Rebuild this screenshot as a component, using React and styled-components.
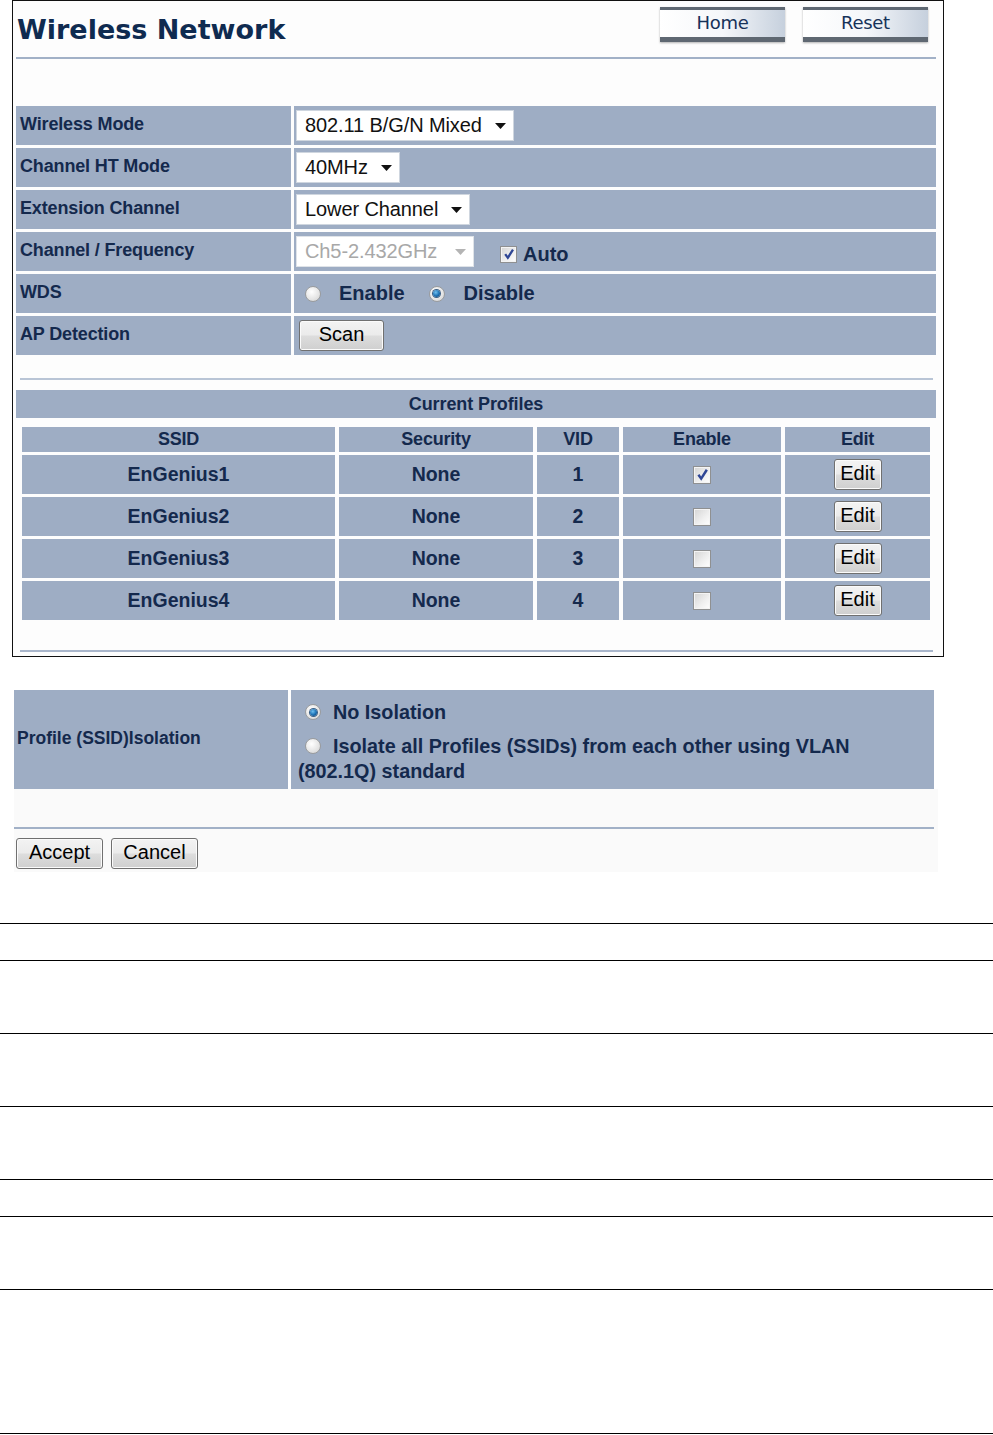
import React from "react";
import styled, { createGlobalStyle } from "styled-components";

const GlobalStyle = createGlobalStyle`
  html, body { margin: 0; padding: 0; background: #ffffff; }
  body { font-family: "Liberation Sans", Arial, sans-serif; color: #14294d; }
  * { box-sizing: border-box; }
`;

const CELL = "#9eadc4";
const NAVY = "#14294d";

const Page = styled.div`
  width: 993px;
  min-height: 1435px;
`;

const Panel = styled.div`
  margin-left: 12px;
  width: 932px;
  border: 1px solid #111;
  background: #fdfdfd;
  padding: 0 7px 4px 3px;
`;

const Header = styled.div`
  height: 56px;
  display: flex;
  justify-content: space-between;
  align-items: flex-start;
`;

const Title = styled.h1`
  margin: 0;
  padding: 13px 0 0 1px;
  font-family: "DejaVu Sans", Verdana, sans-serif;
  font-size: 27px;
  line-height: 31px;
  font-weight: bold;
  color: #0f2b50;
`;

const NavButtons = styled.div`
  display: flex;
  gap: 18px;
  margin: 6px 8px 0 0;
`;

const NavButton = styled.div`
  width: 125px;
  height: 35px;
  border-top: 3px solid #5f6872;
  border-bottom: 5px solid #5f6872;
  background: linear-gradient(90deg, #ffffff 0%, #f5f7fa 50%, #c6d0dd 100%);
  box-shadow: 0 1px 2px rgba(0, 0, 0, 0.3);
  display: flex;
  align-items: center;
  justify-content: center;
  font-family: "DejaVu Sans", sans-serif;
  font-size: 18px;
  letter-spacing: -0.3px;
  color: #163259;
  padding-bottom: 2px;
`;

const Rule = styled.div`
  height: 2px;
  background: ${(p) => p.$color || "#a2b1c7"};
  margin: ${(p) => p.$margin || "0"};
`;

const FormGrid = styled.div`
  display: grid;
  grid-template-columns: 275px 1fr;
  grid-auto-rows: 39px;
  gap: 3px;
  margin-top: 47px;
`;

const LabelCell = styled.div`
  background: ${CELL};
  display: flex;
  align-items: center;
  padding: 0 0 2px 4px;
  font-size: 18px;
  font-weight: bold;
  color: ${NAVY};
  letter-spacing: -0.15px;
`;

const ValueCell = styled.div`
  background: ${CELL};
  display: flex;
  align-items: center;
  padding-left: 2px;
`;

const SelectBox = styled.div`
  height: 31px;
  width: ${(p) => (p.$w ? `${p.$w}px` : "auto")};
  background: #fff;
  border: 1px solid ${(p) => (p.$disabled ? "#dfe3e8" : "#cfd6df")};
  display: flex;
  align-items: center;
  justify-content: space-between;
  gap: 13px;
  padding: 0 7px 0 8px;
  font-size: 20px;
  letter-spacing: -0.1px;
  color: ${(p) => (p.$disabled ? "#a8a8a8" : "#111")};
`;

const Select = ({ value, w, disabled }) => (
  <SelectBox $w={w} $disabled={disabled}>
    <span>{value}</span>
    <svg width="11" height="6" viewBox="0 0 11 6">
      <path d="M0 0h11L5.5 6z" fill={disabled ? "#b4b4b4" : "#111"} />
    </svg>
  </SelectBox>
);

const BoxWrap = styled.span`
  display: inline-flex;
  align-items: center;
  justify-content: center;
  width: ${(p) => p.$size}px;
  height: ${(p) => p.$size}px;
  border: 1px solid #8f9091;
  background: linear-gradient(135deg, #d4d4d4 0%, #eeeeee 55%, #ffffff 100%);
  box-shadow: inset 0 0 0 1px #f4f4f4;
  flex-shrink: 0;
`;

const Checkbox = ({ checked, size = 18 }) => (
  <BoxWrap $size={size}>
    {checked && (
      <svg width={size - 5} height={size - 5} viewBox="0 0 12 12">
        <path d="M2.2 6.2l2.6 3.6L10 1.6" fill="none" stroke="#2f4695" strokeWidth="2.3" />
      </svg>
    )}
  </BoxWrap>
);

const Radio = styled.span`
  display: inline-block;
  position: relative;
  width: 16px;
  height: 16px;
  border-radius: 50%;
  border: 1px solid #9a9c9e;
  background: radial-gradient(circle at 40% 35%, #ffffff 0%, #e4e4e4 60%, #cfcfcf 100%);
  vertical-align: middle;
  flex-shrink: 0;
  &::after {
    content: "";
    display: ${(p) => (p.$checked ? "block" : "none")};
    position: absolute;
    left: 3.5px;
    top: 3.5px;
    width: 7px;
    height: 7px;
    border-radius: 50%;
    background: radial-gradient(circle at 40% 35%, #6fc0f0 0%, #1b6fb2 55%, #0b3d6e 100%);
    box-shadow: 0 0 0 1px #3a5f86;
  }
`;

const OptionText = styled.span`
  font-size: 20px;
  font-weight: bold;
  color: ${NAVY};
`;

const Inline = styled.div`
  display: flex;
  align-items: center;
  gap: ${(p) => p.$gap || 0}px;
  margin-left: ${(p) => p.$ml || 0}px;
  padding-top: ${(p) => p.$pt || 0}px;
`;

const PushButton = styled.button`
  height: 31px;
  width: ${(p) => p.$w}px;
  margin-left: ${(p) => p.$ml || 0}px;
  border: 1px solid #707070;
  border-radius: 3px;
  background: linear-gradient(#f3f3f3 0%, #ebebeb 48%, #dddddd 52%, #cfcfcf 100%);
  box-shadow: inset 0 0 0 1px #fbfbfb;
  font-family: "Liberation Sans", Arial, sans-serif;
  font-size: 20px;
  color: #000;
  padding: 0 0 2px;
  cursor: pointer;
`;

const SectionBar = styled.div`
  margin-top: 10px;
  height: 28px;
  background: ${CELL};
  display: flex;
  align-items: center;
  justify-content: center;
  font-size: 18px;
  font-weight: bold;
  color: ${NAVY};
  letter-spacing: -0.1px;
`;

const ProfileTable = styled.div`
  margin: 9px 6px 0;
  display: grid;
  grid-template-columns: 313px 194px 82px 158px 1fr;
  grid-template-rows: 25px repeat(4, 39px);
  column-gap: 4px;
  row-gap: 3px;
`;

const HeadCell = styled.div`
  background: ${CELL};
  display: flex;
  align-items: center;
  justify-content: center;
  font-size: 18px;
  font-weight: bold;
  color: ${NAVY};
  letter-spacing: -0.2px;
`;

const DataCell = styled.div`
  background: ${CELL};
  display: flex;
  align-items: center;
  justify-content: center;
  font-size: 19.5px;
  font-weight: bold;
  color: ${NAVY};
`;

const Isolation = styled.div`
  margin: 33px 0 0 14px;
  width: 924px;
`;

const IsoGrid = styled.div`
  display: grid;
  grid-template-columns: 274px 643px;
  grid-auto-rows: 99px;
  gap: 3px;
`;

const IsoLabel = styled(LabelCell)`
  padding: 0 0 2px 3px;
  font-size: 17.5px;
  letter-spacing: 0;
`;

const IsoValue = styled.div`
  background: ${CELL};
  padding: 10px 0 0 7px;
  font-size: 19.8px;
  font-weight: bold;
  color: ${NAVY};
  line-height: 25px;
`;

const IsoLine = styled.p`
  margin: 0 0 ${(p) => p.$mb || 0}px;
  & > ${Radio} {
    margin: -3px 12px 0 7px;
  }
`;

const ActionArea = styled.div`
  background: #fafafa;
  height: 83px;
  padding-top: 38px;
`;

const ActionRow = styled.div`
  display: flex;
  gap: 8px;
  margin: 9px 0 0 2px;
`;

const DocLines = styled.div`
  margin-top: 51px;
`;

const DocLine = styled.div`
  border-top: 1.5px solid #000;
  height: ${(p) => p.$h}px;
`;

const profiles = [
  { ssid: "EnGenius1", security: "None", vid: 1, enabled: true },
  { ssid: "EnGenius2", security: "None", vid: 2, enabled: false },
  { ssid: "EnGenius3", security: "None", vid: 3, enabled: false },
  { ssid: "EnGenius4", security: "None", vid: 4, enabled: false },
];

const docGaps = [37, 73, 73, 73, 37, 73, 144, 0];

export default function App() {
  return (
    <Page>
      <GlobalStyle />
      <Panel>
        <Header>
          <Title>Wireless Network</Title>
          <NavButtons>
            <NavButton>Home</NavButton>
            <NavButton>Reset</NavButton>
          </NavButtons>
        </Header>
        <Rule />

        <FormGrid>
          <LabelCell>Wireless Mode</LabelCell>
          <ValueCell>
            <Select value="802.11 B/G/N Mixed" />
          </ValueCell>

          <LabelCell>Channel HT Mode</LabelCell>
          <ValueCell>
            <Select value="40MHz" />
          </ValueCell>

          <LabelCell>Extension Channel</LabelCell>
          <ValueCell>
            <Select value="Lower Channel" />
          </ValueCell>

          <LabelCell>Channel / Frequency</LabelCell>
          <ValueCell>
            <Select value="Ch5-2.432GHz" w={178} disabled />
            <Inline $gap={6} $ml={26} $pt={5}>
              <Checkbox checked size={17} />
              <OptionText>Auto</OptionText>
            </Inline>
          </ValueCell>

          <LabelCell>WDS</LabelCell>
          <ValueCell>
            <Inline $gap={18} $ml={9}>
              <Radio />
              <OptionText>Enable</OptionText>
            </Inline>
            <Inline $gap={19} $ml={24}>
              <Radio $checked />
              <OptionText>Disable</OptionText>
            </Inline>
          </ValueCell>

          <LabelCell>AP Detection</LabelCell>
          <ValueCell>
            <PushButton $w={85} $ml={3}>Scan</PushButton>
          </ValueCell>
        </FormGrid>

        <Rule $color="#b9c5d6" $margin="23px 3px 0 4px" />
        <SectionBar>Current Profiles</SectionBar>

        <ProfileTable>
          <HeadCell>SSID</HeadCell>
          <HeadCell>Security</HeadCell>
          <HeadCell>VID</HeadCell>
          <HeadCell>Enable</HeadCell>
          <HeadCell>Edit</HeadCell>
          {profiles.map((p) => (
            <React.Fragment key={p.ssid}>
              <DataCell>{p.ssid}</DataCell>
              <DataCell>{p.security}</DataCell>
              <DataCell>{p.vid}</DataCell>
              <DataCell>
                <Checkbox checked={p.enabled} />
              </DataCell>
              <DataCell>
                <PushButton $w={48}>Edit</PushButton>
              </DataCell>
            </React.Fragment>
          ))}
        </ProfileTable>

        <Rule $color="#a9b6cb" $margin="30px 3px 0 4px" />
      </Panel>

      <Isolation>
        <IsoGrid>
          <IsoLabel>Profile (SSID)Isolation</IsoLabel>
          <IsoValue>
            <IsoLine $mb={9}>
              <Radio $checked />
              No Isolation
            </IsoLine>
            <IsoLine>
              <Radio />
              Isolate all Profiles (SSIDs) from each other using VLAN
              <br />
              (802.1Q) standard
            </IsoLine>
          </IsoValue>
        </IsoGrid>
        <ActionArea>
          <Rule $margin="0 4px 0 0" />
          <ActionRow>
            <PushButton $w={87}>Accept</PushButton>
            <PushButton $w={87}>Cancel</PushButton>
          </ActionRow>
        </ActionArea>
      </Isolation>

      <DocLines>
        {docGaps.map((h, i) => (
          <DocLine key={i} $h={h} />
        ))}
      </DocLines>
    </Page>
  );
}
